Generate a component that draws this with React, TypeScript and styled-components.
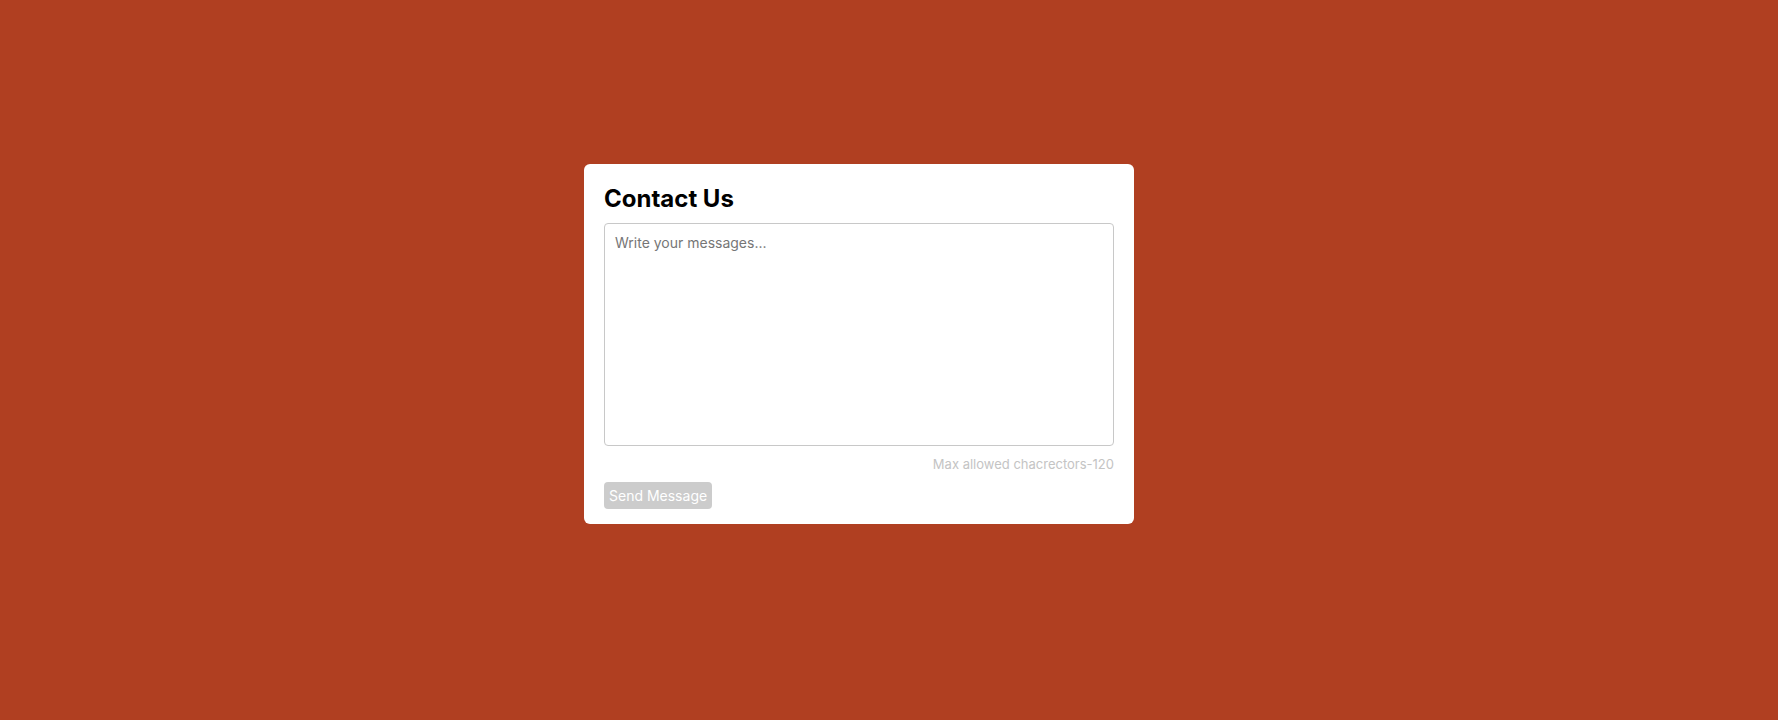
import React from "react";
import styled, { createGlobalStyle } from "styled-components";

const GlobalStyle = createGlobalStyle`
  html, body {
    margin: 0;
    padding: 0;
    background: #b03f21;
    font-family: Inter, "Noto Sans", sans-serif;
  }
  * { box-sizing: border-box; }
`;

const Page = styled.main`
  min-height: 720px;
  display: flex;
  justify-content: center;
  align-items: flex-start;
  padding: 164px 60px 0 0;
`;

const Card = styled.section`
  width: 550px;
  background: #ffffff;
  border-radius: 6px;
  padding: 20px 20px 15px;
  display: flex;
  flex-direction: column;
`;

const Title = styled.h2`
  margin: 0 0 10px;
  font-size: 24px;
  line-height: 29px;
  font-weight: 700;
  color: #000000;
`;

const MessageBox = styled.textarea`
  width: 510px;
  height: 223px;
  border: 1px solid #c8c8c8;
  border-radius: 4px;
  padding: 10px;
  font-family: Inter, "Noto Sans", sans-serif;
  font-size: 14px;
  line-height: 17px;
  resize: none;
  outline: none;
  &::placeholder {
    color: #767676;
  }
`;

const Hint = styled.p`
  margin: 10px 0 10px;
  font-size: 13px;
  line-height: 16px;
  color: #c4c4c4;
  text-align: right;
`;

const SendButton = styled.button`
  align-self: flex-start;
  height: 27px;
  padding: 0 5px;
  border: none;
  border-radius: 4px;
  background: #cccccc;
  color: #ffffff;
  font-family: Inter, "Noto Sans", sans-serif;
  font-size: 14px;
  cursor: not-allowed;
`;

export default function App() {
  return (
    <>
      <GlobalStyle />
      <Page>
        <Card>
          <Title>Contact Us</Title>
          <MessageBox placeholder="Write your messages..." />
          <Hint>Max allowed chacrectors-120</Hint>
          <SendButton disabled>Send Message</SendButton>
        </Card>
      </Page>
    </>
  );
}
